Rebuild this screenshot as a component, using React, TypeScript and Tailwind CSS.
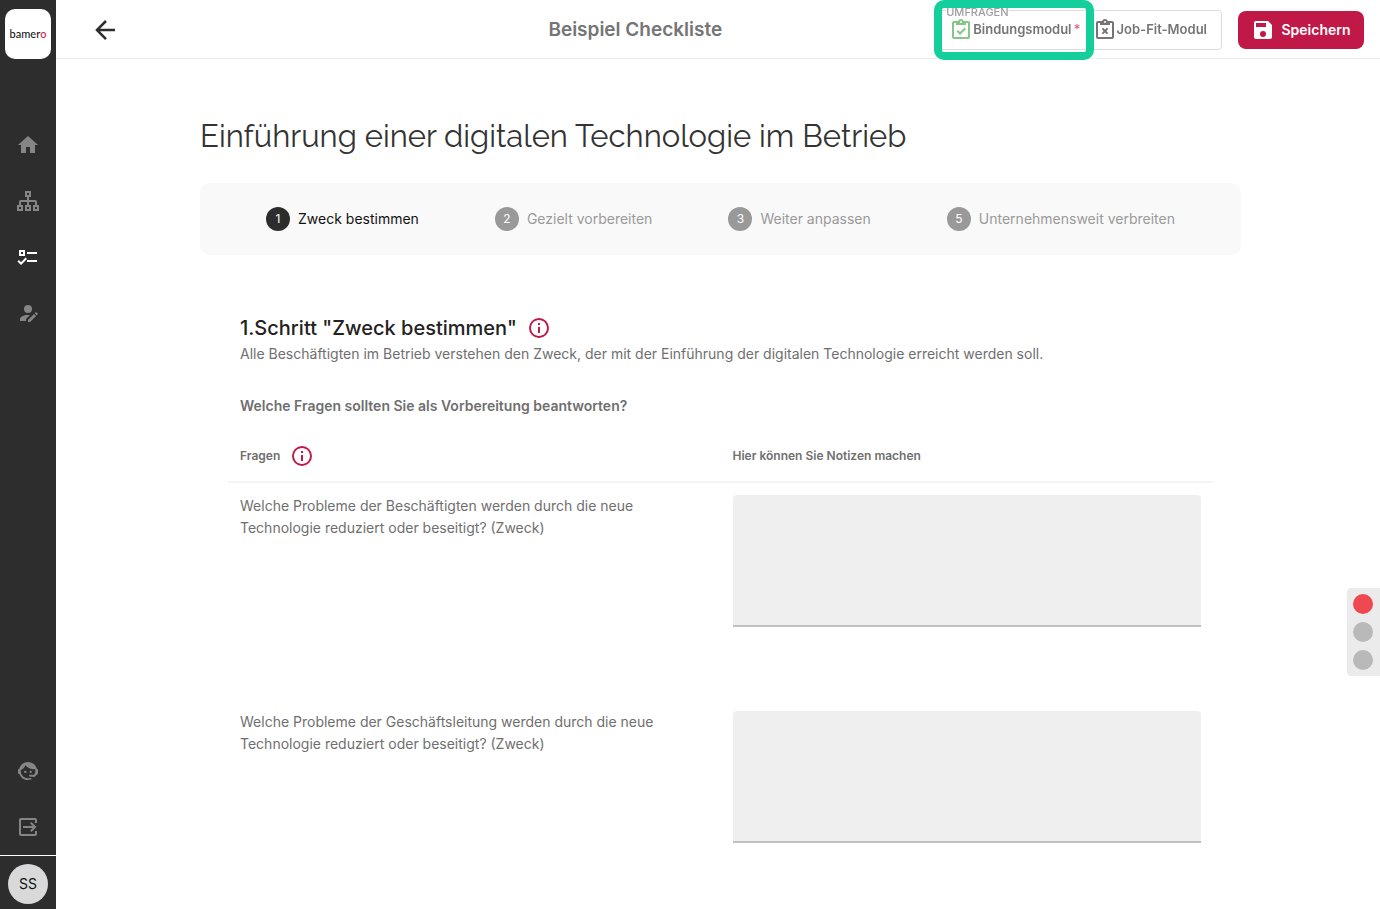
import { useState } from "react";

const paths = {
  back: "M20,11V13H8L13.5,18.5L12.08,19.92L4.16,12L12.08,4.08L13.5,5.5L8,11H20Z",
  home: "M10,20V14H14V20H19V12H22L12,3L2,12H5V20H10Z",
  sitemap:
    "M9 2V8H11V11H5C3.89 11 3 11.89 3 13V16H1V22H7V16H5V13H11V16H9V22H15V16H13V13H19V16H17V22H23V16H21V13C21 11.89 20.11 11 19 11H13V8H15V2H9M11 4H13V6H11V4M3 18H5V20H3V18M11 18H13V20H11V18M19 18H21V20H19V18Z",
  checklist:
    "M3,5H9V11H3V5M5,7V9H7V7H5M11,7H21V9H11V7M11,15H21V17H11V15M5,20L1.5,16.5L2.91,15.09L5,17.17L9.59,12.59L11,14L5,20Z",
  accountEdit:
    "M21.7,13.35L20.7,14.35L18.65,12.3L19.65,11.3C19.86,11.09 20.21,11.09 20.42,11.3L21.7,12.58C21.91,12.79 21.91,13.14 21.7,13.35M12,18.94L18.06,12.88L20.11,14.93L14.06,21H12V18.94M12,14C7.58,14 4,15.79 4,18V20H10V18.11L14,14.11C13.34,14.03 12.67,14 12,14M12,4A4,4 0 0,0 8,8A4,4 0 0,0 12,12A4,4 0 0,0 16,8A4,4 0 0,0 12,4Z",
  agent:
    "M18.72,14.76C19.07,13.91 19.26,13 19.26,12C19.26,11.28 19.15,10.59 18.96,9.95C18.31,10.1 17.63,10.18 16.92,10.18C13.86,10.18 11.15,8.67 9.5,6.34C8.61,8.5 6.91,10.26 4.77,11.22C4.73,11.47 4.73,11.74 4.73,12A7.27,7.27 0 0,0 12,19.27C13.05,19.27 14.06,19.04 14.97,18.63C15.54,19.72 15.8,20.26 15.78,20.26C14.14,20.81 12.87,21.08 12,21.08C9.58,21.08 7.27,20.13 5.57,18.42C4.53,17.38 3.76,16.11 3.33,14.73H2V10.18H3.09C3.93,6.04 7.6,2.92 12,2.92C14.4,2.92 16.71,3.87 18.42,5.58C19.69,6.84 20.54,8.45 20.89,10.18H22V14.73H21.94L18.38,18L13.08,17.4V15.73H17.91L18.72,14.76M9.27,11.77C9.57,11.77 9.86,11.89 10.07,12.11C10.28,12.32 10.4,12.61 10.4,12.91C10.4,13.21 10.28,13.5 10.07,13.71C9.86,13.92 9.57,14.04 9.27,14.04C8.64,14.04 8.13,13.54 8.13,12.91C8.13,12.28 8.64,11.77 9.27,11.77M14.72,11.77C15.35,11.77 15.85,12.28 15.85,12.91C15.85,13.54 15.35,14.04 14.72,14.04C14.09,14.04 13.58,13.54 13.58,12.91A1.14,1.14 0 0,1 14.72,11.77Z",
  exit: "M19 3H5C3.89 3 3 3.89 3 5V19C3 20.11 3.89 21 5 21H19C20.11 21 21 20.11 21 19V16H19V19H5V5H19V8H21V5C21 3.89 20.11 3 19 3M14.08 15.58L15.5 17L20.5 12L15.5 7L14.08 8.41L16.67 11H7V13H16.67L14.08 15.58Z",
  save: "M15,9H5V5H15M12,19A3,3 0 0,1 9,16A3,3 0 0,1 12,13A3,3 0 0,1 15,16A3,3 0 0,1 12,19M17,3H5C3.89,3 3,3.9 3,5V19A2,2 0 0,0 5,21H19A2,2 0 0,0 21,19V7L17,3Z",
  info: "M11,9H13V7H11M12,20C7.59,20 4,16.41 4,12C4,7.59 7.59,4 12,4C16.41,4 20,7.59 20,12C20,16.41 16.41,20 12,20M12,2A10,10 0 0,0 2,12A10,10 0 0,0 12,22A10,10 0 0,0 22,12A10,10 0 0,0 12,2M11,17H13V11H11V17Z",
  clipboardCheck:
    "M19,3H14.82C14.4,1.84 13.3,1 12,1C10.7,1 9.6,1.84 9.18,3H5A2,2 0 0,0 3,5V19A2,2 0 0,0 5,21H19A2,2 0 0,0 21,19V5A2,2 0 0,0 19,3M12,3A1,1 0 0,1 13,4A1,1 0 0,1 12,5A1,1 0 0,1 11,4A1,1 0 0,1 12,3M7,7H17V5H19V19H5V5H7V7M7.5,13.5L9,12L11,14L15.5,9.5L17,11L11,17L7.5,13.5Z",
  clipboardRemove:
    "M19,3H14.82C14.4,1.84 13.3,1 12,1C10.7,1 9.6,1.84 9.18,3H5A2,2 0 0,0 3,5V19A2,2 0 0,0 5,21H19A2,2 0 0,0 21,19V5A2,2 0 0,0 19,3M12,3A1,1 0 0,1 13,4A1,1 0 0,1 12,5A1,1 0 0,1 11,4A1,1 0 0,1 12,3M7,7H17V5H19V19H5V5H7V7M10.1,9.7L12,11.6L13.9,9.7L15.3,11.1L13.4,13L15.3,14.9L13.9,16.3L12,14.4L10.1,16.3L8.7,14.9L10.6,13L8.7,11.1Z",
};

function Icon({ name, className = "" }: { name: keyof typeof paths; className?: string }) {
  return (
    <svg viewBox="0 0 24 24" fill="currentColor" aria-hidden="true" className={`shrink-0 ${className}`}>
      <path d={paths[name]} />
    </svg>
  );
}

const navItems: { icon: keyof typeof paths; label: string; active?: boolean }[] = [
  { icon: "home", label: "Startseite" },
  { icon: "sitemap", label: "Organisation" },
  { icon: "checklist", label: "Checklisten", active: true },
  { icon: "accountEdit", label: "Profil bearbeiten" },
];

const footerItems: { icon: keyof typeof paths; label: string }[] = [
  { icon: "agent", label: "Support" },
  { icon: "exit", label: "Abmelden" },
];

const steps = [
  { number: 1, label: "Zweck bestimmen" },
  { number: 2, label: "Gezielt vorbereiten" },
  { number: 3, label: "Weiter anpassen" },
  { number: 5, label: "Unternehmensweit verbreiten" },
];

const questions = [
  "Welche Probleme der Beschäftigten werden durch die neue Technologie reduziert oder beseitigt? (Zweck)",
  "Welche Probleme der Geschäftsleitung werden durch die neue Technologie reduziert oder beseitigt? (Zweck)",
];

function Sidebar() {
  return (
    <aside className="sticky top-0 flex h-screen w-14 shrink-0 flex-col items-center bg-[#2d2d2d]">
      <a
        href="#"
        className="mt-[9px] flex h-[50px] w-[46px] items-center justify-center rounded-[10px] bg-white font-[Lato,sans-serif] text-[11px] font-medium text-[#222222]"
      >
        bamer<span className="text-[#d81e4f]">o</span>
      </a>
      <nav className="mt-[58px] flex flex-col">
        {navItems.map((item) => (
          <a
            key={item.label}
            href="#"
            aria-label={item.label}
            className={`flex size-14 items-center justify-center ${item.active ? "text-white" : "text-[#858585]"}`}
          >
            <Icon name={item.icon} className="size-6" />
          </a>
        ))}
      </nav>
      <div className="mt-auto flex flex-col">
        {footerItems.map((item) => (
          <a key={item.label} href="#" aria-label={item.label} className="flex size-14 items-center justify-center text-[#858585]">
            <Icon name={item.icon} className="size-6" />
          </a>
        ))}
      </div>
      <div className="flex h-[54px] w-full items-center justify-center border-t border-white pt-[3px]">
        <button type="button" className="size-10 rounded-full bg-[#d9d9d9] text-sm text-[#111111]">
          SS
        </button>
      </div>
    </aside>
  );
}

function Header() {
  return (
    <header className="grid h-[59px] grid-cols-[5fr_auto_7fr] items-center border-b border-[#ececec] pt-0.5 pr-4 pl-[34px]">
      <button type="button" aria-label="Zurück" className="size-[30px] text-[#2d2d2d]">
        <Icon name="back" className="size-[30px]" />
      </button>
      <p className="text-[19px] font-semibold text-[#757575]">Beispiel Checkliste</p>
      <div className="flex items-center justify-end gap-4">
        <div className="relative flex h-10 items-center rounded border border-[#dddddd] text-[13px] font-semibold text-[#757575]">
          <span className="absolute -top-1 left-[7px] bg-white text-[11px] leading-none font-medium text-[#9e9e9e]">UMFRAGEN</span>
          <div className="pointer-events-none absolute -inset-y-[11px] -left-[5px] w-40 rounded-[10px] border-8 border-[#14cf9c]" />
          <button type="button" className="flex items-center pr-3 pl-2.5">
            <Icon name="clipboardCheck" className="size-6 text-[#84c888]" />
            <span>
              Bindungsmodul<span className="pl-0.5 text-[#e0698b]">*</span>
            </span>
          </button>
          <button type="button" className="flex items-center pr-3.5">
            <Icon name="clipboardRemove" className="size-6" />
            Job-Fit-Modul
          </button>
        </div>
        <button
          type="button"
          className="flex h-[38px] w-[126px] items-center justify-center gap-1.5 rounded-lg bg-[#c01847] text-sm font-semibold text-white"
        >
          <Icon name="save" className="size-6" />
          Speichern
        </button>
      </div>
    </header>
  );
}

function Stepper() {
  return (
    <ol className="mt-[27px] flex h-[72px] items-center justify-around rounded-[10px] bg-[#f9f9f9] px-7">
      {steps.map((step, index) => (
        <li key={step.number}>
          <a href="#" className={`flex items-center gap-2 text-sm ${index === 0 ? "text-[#111111]" : "text-[#9a9a9a]"}`}>
            <span
              className={`flex size-6 items-center justify-center rounded-full text-xs text-white ${index === 0 ? "bg-[#2d2d2d]" : "bg-[#999999]"}`}
            >
              {step.number}
            </span>
            {step.label}
          </a>
        </li>
      ))}
    </ol>
  );
}

function InfoButton({ label }: { label: string }) {
  return (
    <button type="button" aria-label={label} className="text-[#c01847]">
      <Icon name="info" className="size-6" />
    </button>
  );
}

function Questions() {
  const [notes, setNotes] = useState<string[]>(["", ""]);
  return (
    <table className="mt-3 w-full table-fixed border-separate border-spacing-0 text-left text-[#6f6f6f]">
      <thead>
        <tr className="text-xs">
          <th scope="col" className="h-[53px] border-b-2 border-[#f4f4f4] px-3 font-semibold">
            <span className="flex items-center gap-2.5">
              Fragen
              <InfoButton label="Informationen zu den Fragen" />
            </span>
          </th>
          <th scope="col" className="border-b-2 border-[#f4f4f4] px-3 font-semibold">
            Hier können Sie Notizen machen
          </th>
        </tr>
      </thead>
      <tbody>
        {questions.map((question, index) => (
          <tr key={question} className="h-[216px] align-top">
            <td className="px-3 pt-3">
              <label htmlFor={`note-${index}`} className="block max-w-[430px] text-sm leading-[22px]">
                {question}
              </label>
            </td>
            <td className="px-3 pt-3">
              <textarea
                id={`note-${index}`}
                value={notes[index]}
                onChange={(event) => setNotes(notes.map((note, i) => (i === index ? event.target.value : note)))}
                className="block h-[132px] w-full resize-none rounded-t border-b-2 border-[#c1c1c1] bg-[#efefef] p-3 text-sm outline-none"
              />
            </td>
          </tr>
        ))}
      </tbody>
    </table>
  );
}

function StatusLight() {
  return (
    <div className="fixed top-[588px] right-0 flex w-[33px] flex-col items-center gap-2 rounded-l bg-[#ebebeb] py-1.5 pr-px">
      <span className="size-5 rounded-full bg-[#ee4951]" />
      <span className="size-5 rounded-full bg-[#b9b9b9]" />
      <span className="size-5 rounded-full bg-[#b9b9b9]" />
    </div>
  );
}

export default function App() {
  return (
    <div className="flex h-screen overflow-hidden bg-white font-[Inter,sans-serif]">
      <Sidebar />
      <div className="min-w-0 flex-1">
        <Header />
        <main className="pt-[57px] pr-[139px] pl-36">
          <h1 className="font-[Raleway,Lato,sans-serif] text-[31px] leading-10 text-[#333333]">
            Einführung einer digitalen Technologie im Betrieb
          </h1>
          <Stepper />
          <section className="px-7 pt-[59px]">
            <div className="px-3">
              <h2 className="flex items-center gap-2.5 text-xl leading-7 font-medium text-[#222222]">
                1.Schritt "Zweck bestimmen"
                <InfoButton label="Informationen zum Schritt" />
              </h2>
              <p className="text-sm leading-6 text-[#6f6f6f]">
                Alle Beschäftigten im Betrieb verstehen den Zweck, der mit der Einführung der digitalen Technologie erreicht werden soll.
              </p>
              <h3 className="mt-7 text-sm leading-6 font-semibold text-[#6f6f6f]">
                Welche Fragen sollten Sie als Vorbereitung beantworten?
              </h3>
            </div>
            <Questions />
          </section>
        </main>
      </div>
      <StatusLight />
    </div>
  );
}
